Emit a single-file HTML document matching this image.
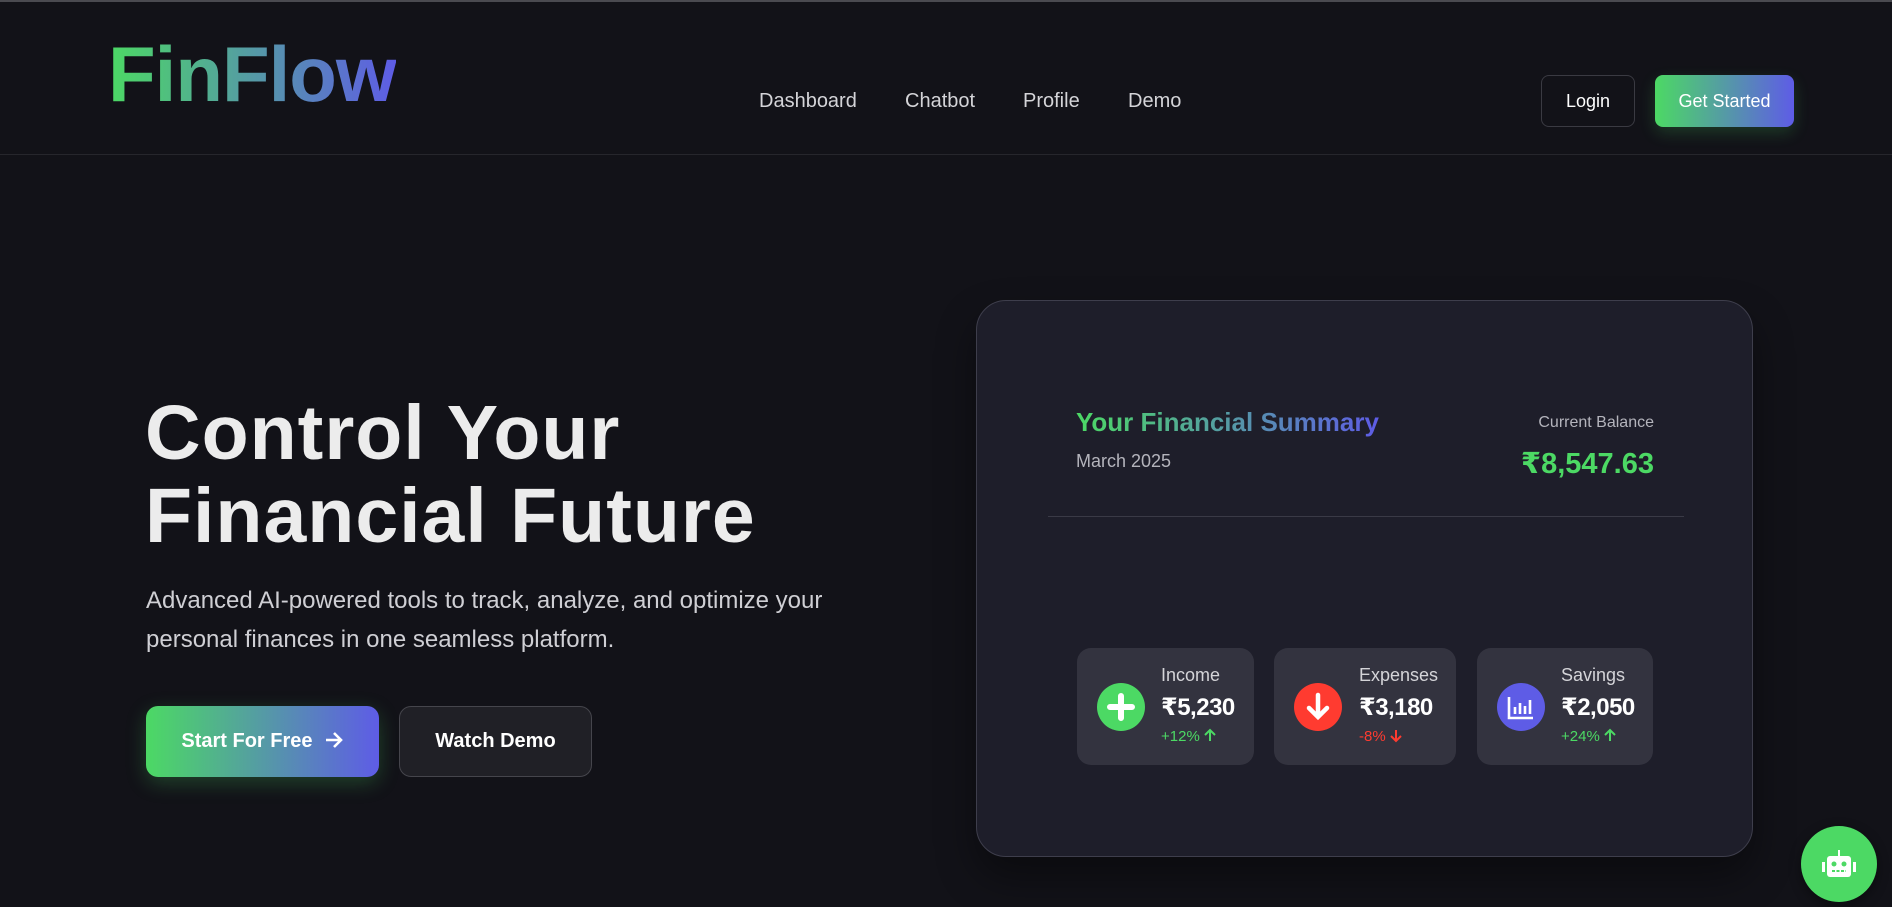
<!DOCTYPE html>
<html><head><meta charset="utf-8"><style>
*{margin:0;padding:0;box-sizing:border-box}
body{width:1892px;height:903px;background:#121218;font-family:"Liberation Sans","DejaVu Sans",sans-serif;position:relative;overflow:hidden;color:#fff}
.a{position:absolute;white-space:nowrap}
.grad{background:linear-gradient(90deg,#4cd964,#5e5ce6);-webkit-background-clip:text;background-clip:text;color:transparent}
.nav{font-size:20px;color:#d4d4d8;top:90px}
.sc{position:absolute;top:648px;height:117px;background:#33333f;border-radius:14px}
.ic{position:absolute;left:20px;top:35px;width:48px;height:48px;border-radius:50%}
.lb{position:absolute;left:84px;top:17px;font-size:18px;color:#d4d4d8}
.vl{position:absolute;left:84px;top:45px;font-size:24px;font-weight:bold;letter-spacing:-0.5px}
.ch{position:absolute;left:84px;top:80px;font-size:15px}
</style></head><body>
<div class="a" style="left:0;top:0;width:1892px;height:2px;background:#4a4a50"></div>
<div class="a grad" style="left:108px;top:29px;font-size:78px;font-weight:bold;letter-spacing:-1px;line-height:90px">FinFlow</div>
<div class="a nav" style="left:759px">Dashboard</div>
<div class="a nav" style="left:905px">Chatbot</div>
<div class="a nav" style="left:1023px">Profile</div>
<div class="a nav" style="left:1128px">Demo</div>
<div class="a" style="left:1541px;top:75px;width:94px;height:52px;border:1px solid #3a3a42;border-radius:8px;font-size:18px;text-align:center;line-height:50px">Login</div>
<div class="a" style="left:1655px;top:75px;width:139px;height:52px;border-radius:8px;background:linear-gradient(90deg,#4cd964,#5e5ce6);font-size:18px;text-align:center;line-height:52px;box-shadow:0 6px 16px rgba(76,217,100,.2)">Get Started</div>
<div class="a" style="left:0;top:154px;width:1892px;height:1px;background:#26262c"></div>

<div class="a" style="left:145px;top:392px;font-size:77px;font-weight:bold;line-height:83px;color:#ececec;letter-spacing:1px">Control Your<br>Financial Future</div>
<div class="a" style="left:146px;top:581px;font-size:24px;line-height:39px;color:#cfcfd4">Advanced AI-powered tools to track, analyze, and optimize your<br>personal finances in one seamless platform.</div>
<div class="a" style="left:146px;top:706px;width:233px;height:71px;border-radius:12px;background:linear-gradient(90deg,#4cd964,#5e5ce6);box-shadow:0 6px 20px rgba(76,217,100,.25);font-size:20px;font-weight:bold;line-height:71px;text-align:center">Start For Free &nbsp;<svg width="20" height="18" viewBox="0 0 20 18" style="vertical-align:-2px"><path d="M2 9H17M10 2l7 7-7 7" stroke="#fff" stroke-width="2.6" fill="none"/></svg></div>
<div class="a" style="left:399px;top:706px;width:193px;height:71px;border-radius:12px;background:#202026;border:1px solid #45454c;font-size:20px;font-weight:bold;line-height:69px;text-align:center">Watch Demo</div>

<div class="a" style="left:976px;top:300px;width:777px;height:557px;border-radius:30px;background:#1e1e2a;border:1px solid #3e3e4c;box-shadow:0 20px 40px rgba(0,0,0,.4)">
 <div class="a grad" style="left:99px;top:106px;font-size:26px;font-weight:bold">Your Financial Summary</div>
 <div class="a" style="left:99px;top:150px;font-size:18px;color:#b4b4bc">March 2025</div>
 <div class="a" style="right:98px;top:113px;font-size:16px;color:#b4b4bc">Current Balance</div>
 <div class="a" style="right:98px;top:145px;font-size:29px;font-weight:bold;color:#4cd964">₹8,547.63</div>
 <div class="a" style="left:71px;top:215px;width:636px;height:1px;background:#3a3a46"></div>
</div>

<div class="sc" style="left:1077px;width:177px">
 <div class="ic" style="background:#4cd964"><svg width="48" height="48"><path d="M24 13V35M13 24H35" stroke="#fff" stroke-width="6" stroke-linecap="round"/></svg></div>
 <div class="lb">Income</div><div class="vl">₹5,230</div><div class="ch" style="color:#4cd964">+12% <svg width="12" height="14" viewBox="0 0 12 14" style="vertical-align:-1px"><path d="M6 13V2M1 7l5-5 5 5" stroke="#4cd964" stroke-width="2" fill="none"/></svg></div>
</div>
<div class="sc" style="left:1274px;width:182px">
 <div class="ic" style="background:#ff3b30"><svg width="48" height="48"><path d="M24 12V34M15 25l9 9 9-9" stroke="#fff" stroke-width="4.5" fill="none" stroke-linecap="round"/></svg></div>
 <div class="lb" style="left:85px">Expenses</div><div class="vl" style="left:85px">₹3,180</div><div class="ch" style="left:85px;color:#ff3b30">-8% <svg width="12" height="14" viewBox="0 0 12 14" style="vertical-align:-2px"><path d="M6 1V12M1 7l5 5 5-5" stroke="#ff3b30" stroke-width="2" fill="none"/></svg></div>
</div>
<div class="sc" style="left:1477px;width:176px">
 <div class="ic" style="background:#5e5ce6"><svg width="48" height="48"><path d="M12 14V35H36M18 24v7M23 20v11M28 23v8M33 17v14" stroke="#fff" stroke-width="2.6" fill="none"/></svg></div>
 <div class="lb" style="left:84px">Savings</div><div class="vl">₹2,050</div><div class="ch" style="color:#4cd964">+24% <svg width="12" height="14" viewBox="0 0 12 14" style="vertical-align:-1px"><path d="M6 13V2M1 7l5-5 5 5" stroke="#4cd964" stroke-width="2" fill="none"/></svg></div>
</div>

<div class="a" style="left:1801px;top:826px;width:76px;height:76px;border-radius:50%;background:#4cd964;box-shadow:0 4px 12px rgba(0,0,0,.4)">
 <svg width="76" height="76"><rect x="26" y="30" width="24" height="21" rx="3" fill="#fff"/><rect x="21" y="36" width="3" height="10" fill="#fff"/><rect x="52" y="36" width="3" height="10" fill="#fff"/><rect x="37" y="24" width="2" height="6" fill="#fff"/><circle cx="33" cy="38" r="2.5" fill="#4cd964"/><circle cx="43" cy="38" r="2.5" fill="#4cd964"/><path d="M31 45h14" stroke="#4cd964" stroke-width="2" stroke-dasharray="3 1.5"/></svg>
</div>
</body></html>
